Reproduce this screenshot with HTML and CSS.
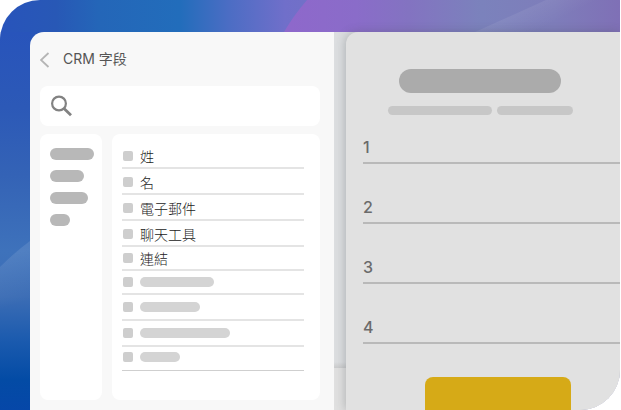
FILE: index.html
```html
<!DOCTYPE html>
<html lang="zh-Hant">
<head>
	<meta charset="utf-8">
	<meta name="viewport" content="width=device-width, initial-scale=1">
	<title>CRM 字段</title>
	<link rel="stylesheet" href="styles.css">
</head>
<body>

<div class="stage">
	<svg class="backdrop" viewBox="0 0 620 410" preserveAspectRatio="none" aria-hidden="true">
		<defs>
			<linearGradient id="top" x1="0" x2="1" y1="0" y2="0">
				<stop offset="0" stop-color="#2854bb"/>
				<stop offset=".09" stop-color="#2858b6"/>
				<stop offset=".16" stop-color="#2466b8"/>
				<stop offset=".29" stop-color="#226dbb"/>
				<stop offset=".37" stop-color="#4c6dc4"/>
				<stop offset=".46" stop-color="#706fca"/>
				<stop offset=".6" stop-color="#7674c0"/>
			</linearGradient>
			<linearGradient id="side" x1="0" x2="0" y1="0" y2="1">
				<stop offset="0" stop-color="#2854bb"/>
				<stop offset=".2" stop-color="#2c59b7"/>
				<stop offset=".38" stop-color="#3463b6"/>
				<stop offset=".58" stop-color="#3e72bb"/>
				<stop offset=".7" stop-color="#3c6db5"/>
				<stop offset=".82" stop-color="#1a5aae"/>
				<stop offset=".92" stop-color="#034ba5"/>
				<stop offset="1" stop-color="#0647a8"/>
			</linearGradient>
			<linearGradient id="purple" gradientUnits="userSpaceOnUse" x1="290" x2="620" y1="0" y2="0">
				<stop offset="0" stop-color="#8e68cb"/>
				<stop offset=".2" stop-color="#8a6cc9"/>
				<stop offset=".36" stop-color="#8373c1"/>
				<stop offset=".58" stop-color="#7b82bc"/>
				<stop offset=".8" stop-color="#7e7dba"/>
				<stop offset="1" stop-color="#7f70b6"/>
			</linearGradient>
			<linearGradient id="ray" gradientUnits="userSpaceOnUse" x1="505" x2="518" y1="14" y2="40">
				<stop offset="0" stop-color="#fff" stop-opacity=".08"/>
				<stop offset="1" stop-color="#fff" stop-opacity="0"/>
			</linearGradient>
			<linearGradient id="glow" gradientUnits="userSpaceOnUse" x1="15" x2="30" y1="253" y2="300">
				<stop offset="0" stop-color="#fff" stop-opacity=".1"/>
				<stop offset="1" stop-color="#fff" stop-opacity="0"/>
			</linearGradient>
		</defs>
		<path fill="url(#top)" d="M0 0H620V410H0z"/>
		<path fill="url(#side)" d="M0 32H30V410H0z"/>
		<path fill="url(#purple)" d="M307 0Q294 15 284 32H620V0z"/>
		<path fill="url(#ray)" d="M546 0L475 32H620V0z"/>
		<path fill="url(#glow)" d="M0 267Q15 252 30 241V340H0z"/>
	</svg>

	<div class="workspace">
		<section class="panel">
			<header class="panel-head">
				<button class="back" type="button" aria-label="返回">
					<svg width="10" height="16" viewBox="0 0 10 16"><path d="M8.500 1L1 8 8.500 15" fill="none" stroke="#b5b5b5" stroke-width="1.800"/></svg>
				</button>
				<h1 class="panel-title">CRM 字段</h1>
			</header>

			<label class="search">
				<svg width="22" height="22" viewBox="0 0 22 22" aria-hidden="true">
					<circle cx="8" cy="8.500" r="6.900" fill="none" stroke="#828282" stroke-width="2.200"/>
					<path d="M13 13.500L20 20.300" stroke="#828282" stroke-width="2.800"/>
				</svg>
				<input class="search-input" type="search" aria-label="搜尋">
			</label>

			<div class="columns">
				<nav class="card groups">
					<span class="group w44"></span>
					<span class="group w34"></span>
					<span class="group w38"></span>
					<span class="group w20"></span>
				</nav>

				<div class="card fields">
					<label class="field"><input class="tick" type="checkbox">姓</label>
					<label class="field"><input class="tick" type="checkbox">名</label>
					<label class="field"><input class="tick" type="checkbox">電子郵件</label>
					<label class="field"><input class="tick" type="checkbox">聊天工具</label>
					<label class="field short"><input class="tick" type="checkbox">連結</label>
					<label class="field blank short"><input class="tick" type="checkbox"><span class="bar w74"></span></label>
					<label class="field blank"><input class="tick" type="checkbox"><span class="bar w60"></span></label>
					<label class="field blank"><input class="tick" type="checkbox"><span class="bar w90"></span></label>
					<label class="field blank last"><input class="tick" type="checkbox"><span class="bar w40"></span></label>
				</div>
			</div>
		</section>

		<div class="page">
			<form class="form">
				<div class="form-head">
					<span class="heading"></span>
					<div class="subheading">
						<span class="sub long"></span>
						<span class="sub"></span>
					</div>
				</div>
				<label class="line">1<input class="line-input" type="text"></label>
				<label class="line">2<input class="line-input" type="text"></label>
				<label class="line">3<input class="line-input" type="text"></label>
				<label class="line">4<input class="line-input" type="text"></label>
				<button class="submit" type="button" aria-label="提交"></button>
			</form>
		</div>
	</div>
</div>

</body>
</html>
```

FILE: styles.css
```css
* {
	box-sizing: border-box;
}

body {
	margin: 0;
	background: #fff;
	font-family: "Liberation Sans", "Noto Sans CJK TC", sans-serif;
	color: #555;
}

input,
button {
	appearance: none;
	margin: 0;
	padding: 0;
	border: 0;
	background: none;
	font: inherit;
	color: inherit;
}

.stage {
	position: relative;
	height: 100vh;
	margin-right: 1px;
	border-radius: 40px 0;
	overflow: hidden;
}

.backdrop {
	position: absolute;
	inset: 0;
	width: 100%;
	height: 100%;
}

.workspace {
	position: relative;
	display: flex;
	height: 100%;
	padding: 32px 0 0 30px;
}

/* field picker */
.panel {
	flex: none;
	width: 304px;
	padding: 0 14px 10px 10px;
	border-radius: 14px 0 0 0;
	background: #f8f8f8;
}

.panel-head {
	display: flex;
	align-items: center;
	gap: 13px;
	height: 54px;
}

.back {
	display: flex;
	width: 10px;
	padding-top: 2px;
}

.panel-title {
	margin: 0;
	font: 400 14px/20px "Inter", "Noto Sans CJK TC", sans-serif;
}

.search {
	display: flex;
	align-items: center;
	gap: 8px;
	height: 40px;
	padding: 0 11px;
	border-radius: 8px;
	background: #fff;
}

.search-input {
	flex: 1;
	min-width: 0;
	font-size: 14px;
	outline: 0;
}

.columns {
	display: flex;
	gap: 10px;
	margin-top: 8px;
}

.card {
	min-height: 266px;
	border-radius: 8px;
	background: #fff;
}

.groups {
	display: flex;
	flex-direction: column;
	gap: 10px;
	width: 62px;
	padding: 14px 0 0 10px;
}

.group {
	height: 12px;
	border-radius: 6px;
	background: #b8b8b8;
}

.fields {
	flex: 1;
	padding: 9px 16px 0 10px;
}

.field {
	display: flex;
	align-items: center;
	gap: 7px;
	height: 26px;
	padding: 2px 0 0 1px;
	border-bottom: 2px solid #e4e4e4;
	font: 300 14px/20px "Noto Sans CJK TC", sans-serif;
	color: #222;
}

.short {
	height: 24px;
	padding-top: 0;
}

.blank {
	padding-top: 0;
}

.last {
	height: 24px;
	padding-bottom: 3px;
	border-bottom: 1px solid #cfcfcf;
}

.tick {
	width: 10px;
	height: 10px;
	border-radius: 2px;
	background: #cecece;
}

.bar {
	height: 10px;
	border-radius: 5px;
	background: #d4d4d4;
}

.w20 { width: 20px; }
.w34 { width: 34px; }
.w38 { width: 38px; }
.w40 { width: 40px; }
.w44 { width: 44px; }
.w60 { width: 60px; }
.w74 { width: 74px; }
.w90 { width: 90px; }

/* form preview */
.page {
	flex: 1;
	min-width: 0;
	padding-left: 12px;
	background: linear-gradient(transparent 330px, #cacbcc 336px, #e0e0e0 336px), #dcdee0;
}

.form {
	height: 100%;
	padding: 37px 0 0 17px;
	border-radius: 12px 0 0 0;
	background: #e1e1e1;
	box-shadow: -1px 0 10px rgba(70, 75, 80, .3);
}

.form-head {
	display: flex;
	flex-direction: column;
	align-items: center;
	gap: 13px;
	width: 234px;
	height: 68px;
}

.heading {
	width: 162px;
	height: 24px;
	border-radius: 12px;
	background: #ababab;
}

.subheading {
	display: flex;
	gap: 5px;
}

.sub {
	width: 76px;
	height: 9px;
	border-radius: 5px;
	background: #c7c7c7;
}

.long {
	width: 104px;
}

.line {
	display: flex;
	align-items: flex-end;
	height: 60px;
	padding-bottom: 5px;
	border-bottom: 2px solid #b9b9b9;
	font: 500 16px/20px "Inter", sans-serif;
	color: #6b6b6b;
}

.form-head + .line {
	height: 27px;
}

.line-input {
	flex: 1;
	min-width: 0;
	height: 20px;
	padding-left: 8px;
	outline: 0;
}

.submit {
	display: block;
	width: 146px;
	height: 44px;
	margin: 33px 0 0 62px;
	border-radius: 8px;
	background: #d6aa17;
}
```
